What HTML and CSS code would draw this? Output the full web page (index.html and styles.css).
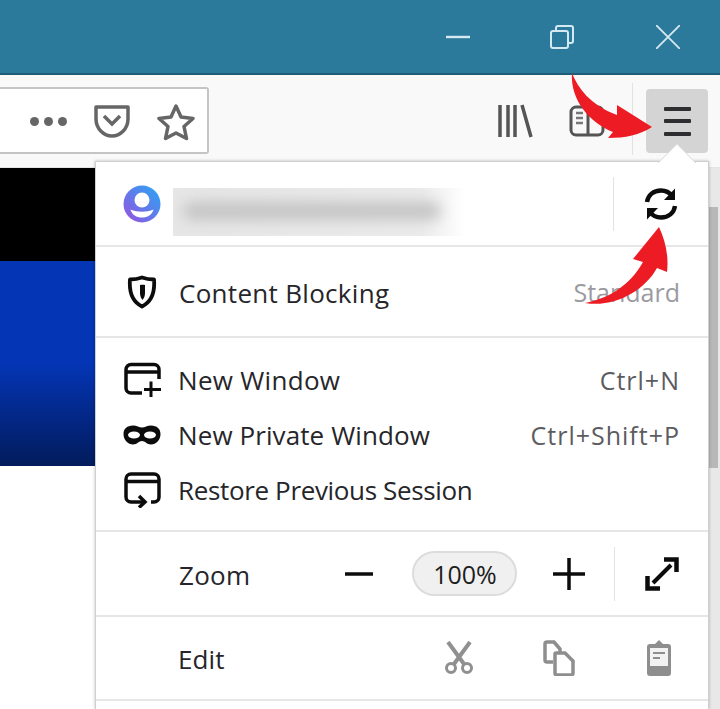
FILE: index.html
```html
<!DOCTYPE html>
<html lang="en">
<head>
<meta charset="utf-8">
<title>Firefox menu</title>
<link rel="stylesheet" href="styles.css">
</head>
<body>
<div class="titlebar">
  <svg class="win-ic" width="24" height="24" viewBox="0 0 24 24"><path d="M0 12h24" stroke="#d5e9f2" stroke-width="2.400"/></svg>
  <svg class="win-ic" width="24" height="24" viewBox="0 0 24 24"><rect x="1" y="6" width="17" height="17" rx="2" fill="none" stroke="#d5e9f2" stroke-width="2"/><path d="M6 6V3a2 2 0 0 1 2-2h13a2 2 0 0 1 2 2v13a2 2 0 0 1-2 2h-3" fill="none" stroke="#d5e9f2" stroke-width="2"/></svg>
  <svg class="win-ic" width="24" height="24" viewBox="0 0 24 24"><path d="M0 0L24 24M24 0L0 24" stroke="#d5e9f2" stroke-width="1.800"/></svg>
</div>
<div class="toolbar">
  <div class="urlbar">
    <div class="dots"><i></i><i></i><i></i></div>
    <svg width="38" height="34" viewBox="0 0 38 34"><path d="M3 2h32v12c0 10-8 17-16 17S3 24 3 14z" fill="none" stroke="#666" stroke-width="3.500" stroke-linejoin="round"/><path d="M11 11l8 8 8-8" fill="none" stroke="#666" stroke-width="3.500"/></svg>
    <svg width="38" height="38" viewBox="0 0 38 38"><path d="M19 3l5 11 12 1.500-9 8 2.500 12L19 30 8.500 35.500 11 23.500l-9-8L14 14z" fill="none" stroke="#666" stroke-width="3.500" stroke-linejoin="round"/></svg>
  </div>
  <div class="tools">
    <svg width="36" height="34" viewBox="0 0 36 34"><path d="M3 1v32M11 1v32M18 1v32M25 1l9 32" stroke="#555" stroke-width="3.500" fill="none"/></svg>
    <svg width="36" height="32" viewBox="0 0 36 32"><rect x="2" y="2" width="32" height="28" rx="5" fill="none" stroke="#555" stroke-width="3"/><path d="M19 2v28" stroke="#555" stroke-width="3"/><path d="M7 8h7M7 13h7M7 18h7" stroke="#777" stroke-width="2.500"/></svg>
  </div>
  <div class="sep-v"></div>
  <div class="menu-btn">
    <span></span><span></span><span></span>
  </div>
</div>
<div class="page">
  <div class="black"></div>
  <div class="blue"></div>
  <div class="scroll-track"></div>
</div>
<div class="panel">
  <section class="row account">
    <svg class="avatar" width="38" height="38" viewBox="0 0 38 38"><defs><linearGradient id="fx" x1="0" y1="1" x2="1" y2="0"><stop offset="0" stop-color="#9a4fe0"/><stop offset="1" stop-color="#25a9f5"/></linearGradient></defs><circle cx="19" cy="19" r="18.500" fill="url(#fx)"/><circle cx="19" cy="15" r="7.500" fill="#fff"/><path d="M7.500 24.500c7 3 16 3 23 0-1.500 5.500-6 8-11.500 8s-10-2.500-11.500-8z" fill="#fff"/></svg>
    <div class="blurred"></div>
    <div class="sep-inner"></div>
    <svg class="sync" width="34" height="34" viewBox="0 0 34 34"><path d="M3 15C4 8 9.500 3.500 17 3.500c4.500 0 8.500 2 11 5.500" fill="none" stroke="#0c0c0d" stroke-width="4.400"/><path d="M31 1.500V13H20z" fill="#0c0c0d"/><path d="M31 19c-1 7-6.500 11.500-14 11.500-4.500 0-8.500-2-11-5.500" fill="none" stroke="#0c0c0d" stroke-width="4.400"/><path d="M3 32.500V21h11z" fill="#0c0c0d"/></svg>
  </section>
  <section class="row blocking">
    <svg class="ic" width="30" height="34" viewBox="0 0 30 34"><path d="M15 2.500c4 1.500 8 2 12 2 1 12-2 22-12 27C5 26.500 2 16.500 3 4.500c4 0 8-.5 12-2z" fill="none" stroke="#0c0c0d" stroke-width="3.800" stroke-linejoin="round"/><path d="M13 10c1-.5 4-.5 5 0v8c0 3-1 5-2.500 7-1.500-2-2.500-4-2.500-7z" fill="#0c0c0d"/></svg>
    <span class="lbl wide">Content Blocking</span>
    <span class="hint fade">Standard</span>
  </section>
  <section class="group">
    <div class="item">
      <svg class="ic" width="38" height="36" viewBox="0 0 38 36"><path d="M19 31H8a5 5 0 0 1-5-5V7.500a5 5 0 0 1 5-5h23a5 5 0 0 1 5 5V17M3 10h33" fill="none" stroke="#0c0c0d" stroke-width="3.500"/><path d="M28 19.500V35M21 27.500h17" stroke="#0c0c0d" stroke-width="3"/></svg>
      <span class="lbl wide">New Window</span><span class="hint keys">Ctrl+N</span>
    </div>
    <div class="item">
      <svg class="ic" width="38" height="20" viewBox="0 0 38 20"><path fill-rule="evenodd" d="M10 .5c4 0 6 2 9 2s5-2 9-2c6 0 9.500 3.500 9.500 8.500 0 6-4.500 10.500-9.500 10.500-4 0-6-3.500-9-3.500s-5 3.500-9 3.500C5 19.500.5 15 .5 9 .5 4 4 .5 10 .5zM5 10a6 3.500 0 1 0 12 0a6 3.500 0 1 0-12 0zM21 10a6 3.500 0 1 0 12 0a6 3.500 0 1 0-12 0z" fill="#0c0c0d"/></svg>
      <span class="lbl">New Private Window</span><span class="hint keys">Ctrl+Shift+P</span>
    </div>
    <div class="item">
      <svg class="ic" width="38" height="36" viewBox="0 0 38 36"><path d="M28 30h3a5 5 0 0 0 5-5V7a5 5 0 0 0-5-5H8a5 5 0 0 0-5 5v18a5 5 0 0 0 5 5h13M3 9.500h33" fill="none" stroke="#0c0c0d" stroke-width="3.500"/><path d="M16 24l6 6-6 5.500" fill="none" stroke="#0c0c0d" stroke-width="3.500"/></svg>
      <span class="lbl tight">Restore Previous Session</span>
    </div>
  </section>
  <section class="row zoom">
    <span class="lbl wide">Zoom</span>
    <svg class="zoom-minus" width="28" height="4" viewBox="0 0 28 4"><path d="M0 2h28" stroke="#0c0c0d" stroke-width="3.500"/></svg>
    <span class="pct">100%</span>
    <svg class="zoom-plus" width="34" height="34" viewBox="0 0 34 34"><path d="M17 1v32M1 17h32" stroke="#0c0c0d" stroke-width="3.500"/></svg>
    <div class="sep-inner short"></div>
    <svg class="expand" width="34" height="34" viewBox="0 0 34 34"><path d="M8 26L26 8" stroke="#0c0c0d" stroke-width="4"/><path d="M19 2.500h12.500V15M2.500 19v12.500H15" fill="none" stroke="#0c0c0d" stroke-width="4.500"/></svg>
  </section>
  <section class="row edit">
    <span class="lbl">Edit</span>
    <svg class="dim" width="30" height="34" viewBox="0 0 30 34"><path d="M4 1l16 22M26 1L10 23" stroke="#909090" stroke-width="4"/><circle cx="7" cy="27" r="4.500" fill="none" stroke="#909090" stroke-width="3"/><circle cx="23" cy="27" r="4.500" fill="none" stroke="#909090" stroke-width="3"/></svg>
    <svg class="dim" width="34" height="36" viewBox="0 0 34 36"><path d="M11 22H5a2 2 0 0 1-2-2V4a2 2 0 0 1 2-2h7l6 7v4" fill="none" stroke="#8e8e8e" stroke-width="3.500"/><path d="M13 14a1 1 0 0 1 1-1h9l8 8v12a2 2 0 0 1-2 2H15a2 2 0 0 1-2-2z" fill="none" stroke="#8e8e8e" stroke-width="3.500"/></svg>
    <svg class="dim" width="28" height="38" viewBox="0 0 28 38"><path d="M2 8a3 3 0 0 1 3-3h5l4-4 4 4h5a3 3 0 0 1 3 3v26a3 3 0 0 1-3 3H5a3 3 0 0 1-3-3z" fill="#8e8e8e"/><rect x="5" y="9" width="18" height="18" fill="#f2f2f2"/><path d="M8 14h12M8 19h7" stroke="#8e8e8e" stroke-width="2"/></svg>
  </section>
</div>
<div class="arrowhead"></div>
<svg class="arrows" width="720" height="709" viewBox="0 0 720 709">
  <path d="M572 73C578 88 590 105 617 115L617 105 652 127C640 135 625 138 608 138L613 132C590 123 570 100 572 73z" fill="#ed1c24"/>
  <path d="M585 303C610 298 630 285 643 262L633 259 659 227C665 240 669 255 667 272L657 268C645 290 615 308 585 303z" fill="#ed1c24"/>
</svg>
</body>
</html>
```
FILE: styles.css
```css
html, body { margin: 0; padding: 0; }
body {
  width: 720px;
  height: 709px;
  overflow: hidden;
  position: relative;
  background: #fff;
  font-family: "Open Sans", "Noto Sans", sans-serif;
  color: #1d1d20;
}
.titlebar {
  height: 73px;
  background: #2c7a9b;
  border-bottom: 2px solid #1d5d78;
  display: flex;
  justify-content: flex-end;
  align-items: center;
  gap: 81px;
  padding-right: 40px;
}
.titlebar svg:nth-child(2) { margin-left: -1px; margin-right: 1px; }
.toolbar {
  height: 93px;
  background: #f9f9fa;
  display: flex;
  align-items: flex-start;
  box-sizing: border-box;
  border-bottom: 1px solid #e4e4e4;
}
.urlbar {
  width: 209px;
  height: 67px;
  margin-top: 12px;
  box-sizing: border-box;
  background: #fff;
  border: 2px solid #c4c4c4;
  border-left: 0;
  border-radius: 0 3px 3px 0;
  display: flex;
  align-items: center;
  justify-content: flex-end;
  padding: 2px 12px 0 0;
  gap: 26px;
}
.dots { display: flex; gap: 5px; }
.dots i { width: 9px; height: 9px; border-radius: 50%; background: #666; }
.tools {
  margin-left: 288px;
  margin-top: 29px;
  display: flex;
  align-items: center;
  gap: 36px;
}
.sep-v { width: 1px; height: 72px; background: #e2e2e2; margin: 8px 0 0 27px; }
.menu-btn {
  width: 62px;
  height: 64px;
  margin: 14px 0 0 13px;
  background: #d4d4d4;
  border-radius: 4px;
  display: flex;
  flex-direction: column;
  justify-content: center;
  align-items: center;
  gap: 8.500px;
}
.menu-btn span { width: 27px; height: 4px; background: #2e2e30; border-radius: 1px; }
.page { height: 541px; display: flex; flex-direction: column; position: relative; }
.black { height: 93px; background: #000; }
.blue { height: 205px; background: linear-gradient(#0435b5 0%, #0435b5 50%, #02206e 90%, #021c5c 100%); }
.scroll-track {
  position: absolute;
  right: 0;
  top: 0;
  bottom: 0;
  width: 12px;
  background: #e8e8e8;
}
.scroll-track::after {
  content: "";
  position: absolute;
  left: 0;
  top: 39px;
  width: 10px;
  height: 261px;
  background: #b8b8b8;
}
.arrowhead {
  position: absolute;
  left: 663px;
  top: 149px;
  width: 28px;
  height: 28px;
  background: #fff;
  transform: rotate(45deg);
  clip-path: polygon(0 0, 100% 0, 0 100%);
  box-shadow: inset 1px 1px 0 #d8d8d8;
}
.panel {
  position: absolute;
  left: 95px;
  top: 161px;
  width: 614px;
  height: 548px;
  box-sizing: border-box;
  background: #fff;
  border: 1px solid #cfcfcf;
  border-bottom: 0;
  box-shadow: 0 0 3px rgba(0,0,0,.25);
  display: flex;
  flex-direction: column;
}
.row, .group { border-bottom: 2px solid #e6e6e6; box-sizing: border-box; padding: 0 28px 0 27px; flex: none; }
.row { display: flex; align-items: center; }
.account { height: 85px; padding-right: 30px; }
.avatar { margin-right: 12px; flex: none; }
.blurred {
  width: 292px;
  height: 48px;
  margin-top: 16px;
  background: linear-gradient(90deg, #e6e6e6 0, #ebebeb 85%, #fff 100%);
  position: relative;
  overflow: hidden;
}
.blurred::after {
  content: "";
  position: absolute;
  left: 10px;
  right: 24px;
  top: 14px;
  height: 18px;
  background: #c4c4c4;
  border-radius: 9px;
  filter: blur(7px);
}
.sep-inner { width: 1px; height: 54px; background: #e3e3e3; margin-left: auto; }
.sep-inner.short { margin-left: 0; }
.sync { margin-left: 30px; }
.blocking { height: 91px; }
.blocking .ic { margin: 0 22px 0 4px; flex: none; }
.lbl { font-size: 26px; letter-spacing: .1px; color: #26262a; white-space: nowrap; }
.row .lbl { padding-top: 2px; }
.lbl.wide { letter-spacing: .3px; }
.lbl.tight { letter-spacing: -.35px; }
.hint { margin-left: auto; font-size: 25px; color: #5c5c60; white-space: nowrap; }
.hint.keys { letter-spacing: 1px; }
.fade { color: #9a9aa0; }
.group { height: 194px; padding-top: 14px; display: flex; flex-direction: column; }
.item { height: 55px; display: flex; align-items: center; flex: none; }
.item .ic { margin-right: 17px; flex: none; }
.zoom { height: 85px; padding-left: 83px; }
.zoom-minus { margin-left: 95px; }
.pct {
  margin-left: 39px;
  width: 105px;
  height: 45px;
  box-sizing: border-box;
  border: 2px solid #dcdcdc;
  background: #f0f0f0;
  border-radius: 23px;
  font-size: 25px;
  display: flex;
  align-items: center;
  justify-content: center;
}
.zoom-plus { margin: 0 28px 0 35px; }
.expand { margin-left: 30px; }
.edit { height: 84px; padding-left: 82px; padding-right: 35px; }
.edit svg:nth-of-type(1) { margin-left: auto; }
.edit svg:nth-of-type(2) { margin-left: 68px; }
.edit svg:nth-of-type(3) { margin-left: 69px; }
.arrows { position: absolute; left: 0; top: 0; pointer-events: none; }
```
